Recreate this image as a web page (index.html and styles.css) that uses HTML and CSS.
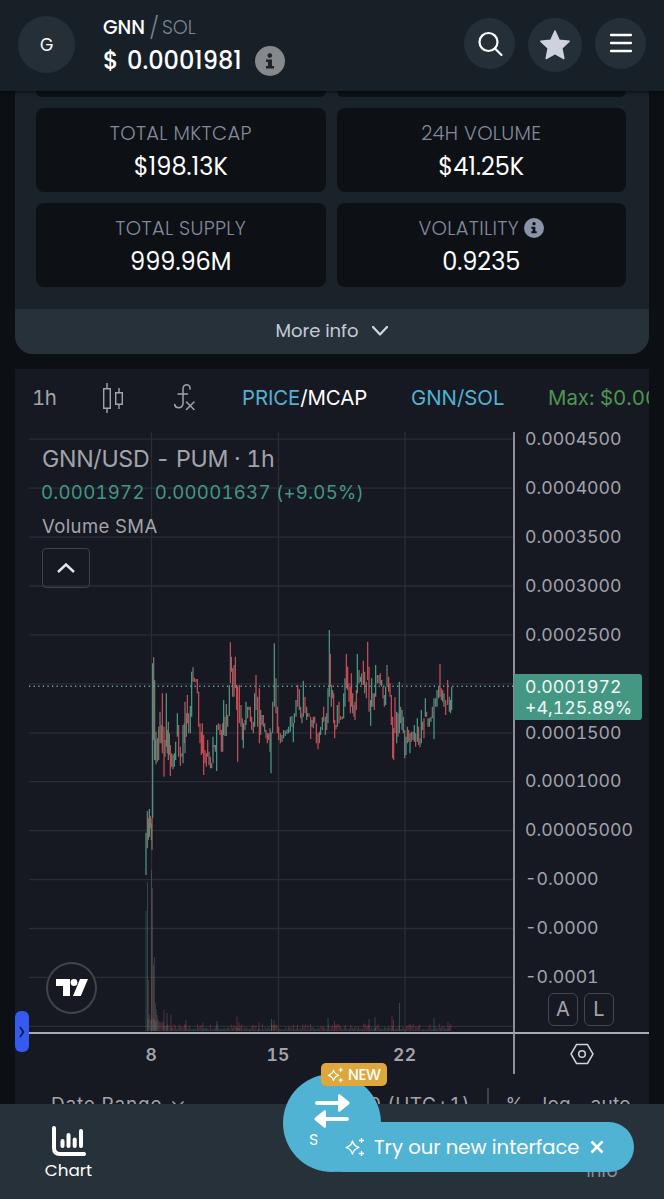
FILE: index.html
```html
<!DOCTYPE html>
<html lang="en">
<head>
    <meta charset="UTF-8">
    <meta name="viewport" content="width=device-width, initial-scale=1.0">
    <title>GNN/SOL</title>
    <link rel="stylesheet" href="styles.css">
</head>
<body>
    <header class="app-header">
        <div class="token-avatar">G</div>
        <div class="token-info">
            <div class="token-pair"><b>GNN</b><i>/</i><span>SOL</span></div>
            <div class="token-price">
                <span class="currency">$</span><span class="price-value">0.0001981</span>
                <svg class="price-info" viewBox="0 0 30 30"><circle cx="15" cy="15" r="15" fill="#85898b"/><circle cx="14.800" cy="9.500" r="2.300" fill="#1b242b"/><path d="M11 13.500h6v6.500h2v2.500h-8V20h2v-4h-2z" fill="#1b242b"/></svg>
            </div>
        </div>
        <div class="header-actions">
            <button class="round-btn"><svg width="28" height="28" viewBox="0 0 28 28" fill="none" stroke="#fff" stroke-width="2.200" stroke-linecap="round"><circle cx="12.500" cy="12" r="9"/><path d="M19 18.500l6.500 6.500"/></svg></button>
            <button class="round-btn star"><svg width="32" height="32" viewBox="0 0 32 32"><path d="M16 2l4.200 9.200 10 1.100-7.400 6.900 2 10.300L16 24.500l-8.800 5 2-10.300-7.400-6.900 10-1.100z" fill="#d0d1df" stroke="#d0d1df" stroke-width="1.500" stroke-linejoin="round"/></svg></button>
            <button class="round-btn"><svg width="24" height="22" viewBox="0 0 24 22" stroke="#fff" stroke-width="2.300" stroke-linecap="round"><path d="M2 2h20M2 10h20M2 18h20"/></svg></button>
        </div>
    </header>

    <main>
        <section class="info-panel">
            <div class="info-grid">
                <div class="info-card cut"></div>
                <div class="info-card cut"></div>
                <div class="info-card">
                    <h4>TOTAL MKTCAP</h4>
                    <p>$198.13K</p>
                </div>
                <div class="info-card">
                    <h4>24H VOLUME</h4>
                    <p>$41.25K</p>
                </div>
                <div class="info-card">
                    <h4>TOTAL SUPPLY</h4>
                    <p>999.96M</p>
                </div>
                <div class="info-card">
                    <h4>VOLATILITY <svg width="20" height="20" viewBox="0 0 30 30"><circle cx="15" cy="15" r="15" fill="#8b93a9"/><circle cx="15" cy="8.500" r="2.500" fill="#0d1115"/><path d="M11 13h6v7h2v3h-8v-3h2v-4h-2z" fill="#0d1115"/></svg></h4>
                    <p>0.9235</p>
                </div>
            </div>
            <div class="more-info">More info <svg width="18" height="12" viewBox="0 0 18 12" fill="none" stroke="#d3d6e0" stroke-width="2.200" stroke-linecap="round" stroke-linejoin="round"><path d="M2 2l7 7.500L16 2"/></svg></div>
        </section>

        <section class="chart-card">
            <div class="chart-toolbar">
                <span class="interval">1h</span>
                <svg width="24" height="32" viewBox="0 0 24 32" fill="none" stroke="#a3a4ab" stroke-width="1.400"><path d="M1.700 6.700h6.600v19.600H1.700zM5 1v5.500M5 26.500V31M13.700 10.700h6.600v11.600h-6.600zM17 6v4.500M17 22.500V27"/></svg>
                <svg class="fx" width="24" height="30" viewBox="0 0 24 30" fill="none" stroke="#a3a4ab" stroke-width="1.500" stroke-linecap="round"><path d="M17 6V5c0-4.500-7-4.500-7 1v14c0 6-7.500 6-8.300 1.500M5 11h9.500M13.500 19l7.500 7.500M21 19l-7.500 7.500"/></svg>
                <span class="price-toggle"><em>PRICE</em>/MCAP</span>
                <span class="pair-toggle">GNN/SOL</span>
                <span class="max-price">Max: $0.0004</span>
            </div>

            <div class="chart-body">
                <div class="plot">
                    <svg id="plot" width="485" height="600" viewBox="29 432 485 600">
                        <g id="grid" stroke="#2a2c36" stroke-width="1.300"></g>
                        <g id="volume" stroke-width="1"></g>
                        <g id="candles" stroke-width="1.200"></g>
                        <path d="M29 686.300h484" stroke="#6fa69c" stroke-width="1.400" stroke-dasharray="1.300 3.300"/>
                    </svg>
                    <div class="legend">
                        <div class="legend-title">GNN/USD - PUM · 1h</div>
                        <div class="legend-values"><span>0.0001972</span><span>0.00001637 (+9.05%)</span></div>
                        <div class="legend-study">Volume SMA</div>
                        <button class="collapse"><svg width="20" height="12" viewBox="0 0 20 12" fill="none" stroke="#e4e5ea" stroke-width="2.400"><path d="M2 10l8-7.500 8 7.500"/></svg></button>
                    </div>
                    <div class="tv-logo"><svg width="34" height="18" viewBox="0 0 34 18" fill="#fff"><path d="M1 0h14v17H8V7H1zM25 0h8l-7.200 17h-7.800z"/><circle cx="19" cy="3.500" r="3.400"/></svg></div>
                </div>
                <div class="price-scale">
                    <ul>
                        <li>0.0004500</li>
                        <li>0.0004000</li>
                        <li>0.0003500</li>
                        <li>0.0003000</li>
                        <li>0.0002500</li>
                        <li></li>
                        <li>0.0001500</li>
                        <li>0.0001000</li>
                        <li>0.00005000</li>
                        <li>-0.0000</li>
                        <li>-0.0000</li>
                        <li>-0.0001</li>
                    </ul>
                    <div class="last-price">0.0001972<br><span>+4,125.89%</span></div>
                    <div class="scale-modes"><span>A</span><span>L</span></div>
                </div>
                <div class="time-scale"><span>8</span><span>15</span><span>22</span></div>
                <div class="scale-settings"><svg width="24" height="22" viewBox="0 0 24 22" fill="none" stroke="#d2d3d8" stroke-width="1.500"><path d="M6.500 1.500h11L23 11l-5.500 9.500h-11L1 11z"/><circle cx="12" cy="11" r="3.300"/></svg></div>
            </div>

            <div class="range-bar">
                <span class="date-range">Date Range</span>
                <svg width="14" height="9" viewBox="0 0 14 9" fill="none" stroke="#a3a4ab" stroke-width="1.500"><path d="M1.500 1.500L7 7l5.500-5.500"/></svg>
                <span class="clock">12:45:30 (UTC+1)</span>
                <span class="divider"></span>
                <span class="percent">%</span>
                <span class="log">log</span>
                <span class="auto">auto</span>
            </div>
            <div class="drawer-handle"><svg width="6" height="12" viewBox="0 0 6 12" fill="none" stroke="#10142c" stroke-width="1.500"><path d="M1 1l3.500 5L1 11"/></svg></div>
        </section>
    </main>

    <nav class="bottom-nav">
        <div class="nav-item">
            <svg width="36" height="32" viewBox="0 0 36 32" fill="none" stroke="#fff" stroke-linecap="round"><path d="M3 3v20q0 6 6 6h24" stroke-width="4"/><path d="M11.500 16v5M17.500 10v11M23.700 14.500v6.500M30 6v15" stroke-width="4"/></svg>
            <span>Chart</span>
        </div>
        <div class="nav-item info"><span>Info</span></div>
        <div class="swap-btn">
            <svg width="36" height="36" viewBox="0 0 36 36" fill="#fff"><path d="M3 8h21V2.500q0-2 2-1l9 7.200q1.200 1.300 0 2.600l-9 7.200q-2 1-2-1V12H3q-2-.3-2-2t2-2zM33 24H12v-5.500q0-2-2-1l-9 7.200q-1.200 1.300 0 2.600l9 7.200q2 1 2-1V28h21q2-.3 2-2t-2-2z"/></svg>
            <span>S</span>
        </div>
        <div class="new-badge">
            <svg width="17" height="16" viewBox="0 0 20 20" fill="none" stroke="#fff" stroke-width="1.500" stroke-linejoin="round"><path d="M7.500 4q1.300 5 6.500 6.500-5.200 1.500-6.500 6.500Q6.200 12 1 10.500 6.200 9 7.500 4zM16.500 1v5M14 3.500h5M16.500 14v5M14 16.500h5"/></svg>
            NEW
        </div>
        <div class="try-pill">
            <svg width="20" height="20" viewBox="0 0 20 20" fill="none" stroke="#fff" stroke-width="1.300" stroke-linejoin="round"><path d="M7.500 4q1.300 5 6.500 6.500-5.200 1.500-6.500 6.500Q6.200 12 1 10.500 6.200 9 7.500 4zM16.500 1v5M14 3.500h5M16.500 14v5M14 16.500h5"/></svg>
            <span>Try our new interface</span>
            <svg width="14" height="14" viewBox="0 0 14 14" stroke="#fff" stroke-width="2.500"><path d="M1.500 1.500l11 11M12.500 1.500l-11 11"/></svg>
        </div>
    </nav>

    <script src="chart.js"></script>
</body>
</html>
```

FILE: styles.css
```css
:root {
    --bg: #0c1014;
    --header: #182027;
    --panel: #1a222a;
    --raised: #27313a;
    --chart: #161822;
    --muted: #82899d;
    --scale: #a3a4ab;
    --blue: #51b3d4;
    --green: #449782;
}

* {
    box-sizing: border-box;
}

body {
    margin: 0;
    height: 1199px;
    display: flex;
    flex-direction: column;
    overflow: hidden;
    background: var(--bg);
    color: white;
    font-family: Poppins, Inter, "Liberation Sans", sans-serif;
}

svg {
    display: block;
    flex: none;
}

button {
    padding: 0;
    border: none;
    background: none;
}

.app-header {
    flex: none;
    height: 91px;
    padding: 0 18px;
    display: flex;
    background: var(--header);
    box-shadow: 0 1px 4px rgba(0, 0, 0, 0.5);
    position: relative;
    z-index: 2;
}

.token-avatar {
    width: 57px;
    height: 57px;
    margin-top: 16px;
    border-radius: 50%;
    background: #252f37;
    display: flex;
    align-items: center;
    justify-content: center;
    font-size: 17px;
}

.token-info {
    margin: 15px 0 0 28px;
}

.token-pair {
    height: 24px;
    display: flex;
    align-items: center;
    font-size: 19px;
    color: #7c8391;
}

.token-pair b {
    width: 43px;
    font-weight: 500;
    color: white;
    letter-spacing: -0.1px;
}

.token-pair i {
    width: 16px;
    text-align: center;
    font-size: 22px;
    font-weight: 300;
    font-style: normal;
}

.token-pair span {
    font-weight: 300;
    letter-spacing: -0.1px;
}

.token-price {
    height: 42px;
    display: flex;
    align-items: center;
    font-size: 24px;
    font-weight: 500;
}

.currency {
    width: 24px;
}

.price-value {
    width: 128px;
}

.price-info {
    width: 30px;
    height: 30px;
    margin-top: 2px;
}

.header-actions {
    margin: 18px 0 0 auto;
    display: flex;
    gap: 13px;
}

.round-btn {
    width: 51px;
    height: 51px;
    border-radius: 50%;
    background: #252f37;
    display: flex;
    align-items: center;
    justify-content: center;
}

.round-btn.star {
    width: 54px;
    height: 54px;
}

main {
    flex: 1;
    min-height: 0;
    overflow: hidden;
    padding: 0 15px;
}

.info-panel {
    height: 263px;
    display: flex;
    flex-direction: column;
    justify-content: space-between;
    border-radius: 0 0 18px 18px;
    overflow: hidden;
    background: var(--panel);
}

.info-grid {
    padding: 0 23px 0 21px;
    display: grid;
    grid-template-columns: 1fr 1fr;
    gap: 11px;
}

.info-card {
    height: 84px;
    padding-top: 11px;
    border-radius: 8px;
    background: #0d1115;
    text-align: center;
}

.info-card.cut {
    height: 6px;
    padding: 0;
    border-radius: 0 0 8px 8px;
}

.info-card h4 {
    margin: 0;
    height: 28px;
    display: flex;
    align-items: center;
    justify-content: center;
    gap: 5px;
    color: var(--muted);
    font-size: 19.5px;
    font-weight: 300;
    letter-spacing: 0.3px;
}

.info-card p {
    margin: 5px 0 0;
    font-size: 24px;
    line-height: 30px;
}

.more-info {
    height: 45px;
    padding: 0 0 2px 0;
    display: flex;
    align-items: center;
    justify-content: center;
    gap: 12px;
    background: var(--raised);
    color: #c6cad5;
    font-size: 18px;
}

.chart-card {
    margin-top: 15px;
    height: 760px;
    background: var(--chart);
    font-family: Inter, "Liberation Sans", sans-serif;
    font-variant-numeric: tabular-nums;
    color: var(--scale);
    position: relative;
}

.chart-toolbar {
    height: 63px;
    padding: 0 0 6px 17px;
    display: flex;
    align-items: center;
    overflow: hidden;
    white-space: nowrap;
    font-size: 20.4px;
}

.chart-toolbar span {
    flex: none;
}

.chart-toolbar .interval {
    width: 70px;
    letter-spacing: -0.5px;
}

.chart-toolbar .fx {
    margin-left: 47px;
    margin-right: 45px;
}

.chart-toolbar .price-toggle {
    width: 169px;
    color: white;
    letter-spacing: -0.1px;
}

.price-toggle em {
    font-style: normal;
    color: #52b2d2;
}

.chart-toolbar .pair-toggle {
    width: 137px;
    color: #52b2d2;
}

.max-price {
    color: #4c9750;
}

.chart-body {
    margin-left: 14px;
    display: grid;
    grid-template-columns: 484px 136px;
    grid-template-rows: 600px 42px;
}

.plot {
    position: relative;
}

.legend {
    position: absolute;
    top: 11px;
    left: 13px;
    white-space: nowrap;
}

.legend-title {
    font-size: 23.2px;
    line-height: 32px;
    letter-spacing: -0.3px;
}

.legend-values {
    display: flex;
    gap: 10px;
    margin-left: -1px;
    color: #449782;
    font-size: 18.6px;
    line-height: 35px;
    letter-spacing: 0.25px;
}

.legend-study {
    font-size: 18.5px;
    line-height: 32px;
    letter-spacing: 0.4px;
}

.collapse {
    width: 48px;
    height: 40px;
    margin-top: 6px;
    border: 1.5px solid #3f414b;
    border-radius: 4px;
    display: flex;
    align-items: center;
    justify-content: center;
}

.tv-logo {
    position: absolute;
    left: 17px;
    top: 530px;
    width: 51px;
    height: 52px;
    border: 2px solid #42444d;
    border-radius: 50%;
    background: var(--chart);
    display: flex;
    align-items: center;
    justify-content: center;
}

.price-scale {
    position: relative;
    border-left: 2px solid #8e8f96;
}

.price-scale ul {
    list-style: none;
    margin: -17px 0 0;
    padding: 0 0 0 10px;
    font-size: 17.7px;
}

.price-scale li {
    height: 48.93px;
    line-height: 48.93px;
}

.last-price {
    position: absolute;
    left: -1px;
    top: 242px;
    width: 128px;
    height: 46px;
    padding: 2px 0 0 11px;
    border-radius: 0 3px 3px 0;
    background: var(--green);
    color: #f2f8f6;
    font-size: 17.7px;
    line-height: 21px;
}

.scale-modes {
    position: absolute;
    left: 33px;
    top: 561px;
    display: flex;
    gap: 6px;
}

.scale-modes span {
    width: 30px;
    height: 33px;
    border: 1.5px solid #44464f;
    border-radius: 6px;
    text-align: center;
    font-size: 20px;
    line-height: 31px;
}

.time-scale {
    padding-left: 59px;
    display: grid;
    grid-template-columns: repeat(3, 126.7px);
    border-top: 2px solid #aaabb0;
    text-align: center;
    font-size: 17.5px;
    font-weight: 600;
    line-height: 41px;
    letter-spacing: 0.3px;
}

.scale-settings {
    border-top: 2px solid #aaabb0;
    border-left: 2px solid #8e8f96;
    display: flex;
    align-items: center;
    justify-content: center;
}

.range-bar {
    height: 60px;
    padding-left: 36px;
    display: flex;
    align-items: center;
    font-size: 19px;
    letter-spacing: 0.3px;
    white-space: nowrap;
}

.date-range {
    width: 120px;
    letter-spacing: 0.8px;
}

.clock {
    width: 170px;
    margin-left: 115px;
    display: flex;
    justify-content: flex-end;
    letter-spacing: 0.5px;
}

.divider {
    width: 1.5px;
    height: 32px;
    margin: 0 17px;
    background: #3f414b;
}

.percent {
    width: 37px;
}

.log {
    width: 48px;
}

.drawer-handle {
    position: absolute;
    left: 0;
    top: 642px;
    width: 14px;
    height: 41px;
    border-radius: 6px;
    background: #345af2;
    display: flex;
    align-items: center;
    justify-content: center;
}

.bottom-nav {
    flex: none;
    height: 95px;
    padding: 0 28px;
    display: flex;
    justify-content: space-between;
    background: var(--raised);
    position: relative;
    font-size: 16.8px;
}

.nav-item {
    width: 81px;
    padding-top: 21px;
    display: flex;
    flex-direction: column;
    align-items: center;
}

.nav-item.info {
    width: 68px;
    padding-top: 54px;
    color: #8b93a0;
}

.swap-btn {
    position: absolute;
    left: 283px;
    top: -30px;
    width: 98px;
    height: 98px;
    border-radius: 50%;
    background: var(--blue);
}

.swap-btn svg {
    margin: 19px 0 0 31px;
}

.swap-btn span {
    position: absolute;
    left: 26px;
    top: 57px;
    font-size: 16px;
    line-height: 18px;
}

.new-badge {
    position: absolute;
    left: 321px;
    top: -41px;
    width: 66px;
    height: 23px;
    padding-left: 6px;
    border-radius: 5px;
    background: #dda73b;
    display: flex;
    align-items: center;
    gap: 4px;
    font-size: 15px;
    font-weight: 500;
    letter-spacing: -0.3px;
}

.try-pill {
    position: absolute;
    left: 317px;
    top: 18px;
    width: 317px;
    height: 50px;
    padding-left: 28px;
    border-radius: 25px;
    background: var(--blue);
    display: flex;
    align-items: center;
    white-space: nowrap;
    font-size: 19.6px;
}

.try-pill span {
    width: 216px;
    margin-left: 9px;
}
```

FILE: chart.js
```js
const GREEN = '#4d9d8a';
const RED = '#cf4f59';
const MIXED = '#80796f';
const COLORS = { g: GREEN, r: RED, m: MIXED };

function line(group, x1, y1, x2, y2, color, opacity) {
    const el = document.createElementNS('http://www.w3.org/2000/svg', 'line');
    el.setAttribute('x1', x1);
    el.setAttribute('y1', y1);
    el.setAttribute('x2', x2);
    el.setAttribute('y2', y2);
    if (color) el.setAttribute('stroke', color);
    if (opacity) el.setAttribute('opacity', opacity);
    document.getElementById(group).appendChild(el);
}

// Grid
for (let i = 0; i < 13; i++) {
    const y = 439.2 + i * 48.93;
    line('grid', 29, y, 513, y);
}
[151.5, 278.5, 405].forEach(x => line('grid', x, 432, x, 1032));

// Bars: time offset, high, low, direction
const first = `48,668,795,g 52,603,715,m 55,625,690,m 58,597,680,g 61,618,655,r 64,640,690,m 66,625,720,m
68,160,625,g 71,142,390,m 74,210,450,m 76,390,450,g 78,365,463,m 82,385,455,m 86,350,450,m 90,305,400,m
94,345,400,m 97,250,430,r 102,350,500,r 105,390,440,m 109,250,410,g 112,360,430,m 115,335,450,m 118,370,435,m
121,405,498,r 125,430,470,r 129,435,478,g 133,430,470,g 137,395,450,g 142,310,380,g 146,345,440,r
151,410,468,r 156,430,440,g 159,345,460,g 163,340,400,m 165,275,430,m 169,310,380,m 172,255,340,r 176,310,370,m
181,288,370,g 185,185,320,g 189,172,215,m 193,203,215,r 198,207,217,r 202,207,250,r 206,245,350,r
210,340,400,r 214,365,435,r 217,340,430,r 221,375,495,r 225,420,460,r 229,430,470,r 233,390,440,r
237,425,465,m 241,440,475,r 245,460,475,g 249,380,460,g 253,405,412,g 256,405,425,m 260,345,483,g
265,340,360,r 270,343,375,r 274,360,425,r 278,340,425,m 281,270,375,g 285,320,378,m 289,282,378,m
293,315,350,m 298,225,318,g 301,97,220,r 304,140,185,m 308,175,260,r 312,165,260,m 316,140,235,r
320,225,300,r 323,230,455,r 328,225,340,r 333,285,350,m 337,325,390,r 340,340,415,g 345,330,360,m
348,275,345,g 353,290,325,m 357,290,300,g 361,290,335,r 365,320,360,r 370,335,370,m 374,250,350,g
378,195,300,r 383,260,350,m 388,235,400,r 392,300,375,m 396,315,345,g 400,315,350,r 404,340,365,m
408,360,385,m 412,370,400,r 416,370,390,r 420,355,425,m 423,365,490,g 428,275,370,m 433,100,290,g
438,205,310,m 442,290,370,r 446,350,390,r 451,370,400,r 456,375,395,g 461,360,385,g 466,362,378,m
471,358,372,g 476,350,370,g 481,320,365,g 486,318,350,m 490,340,397,g 493,310,340,g 498,270,320,g
503,225,290,r 508,238,300,m 512,290,325,r 516,310,340,m 520,212,320,g 525,260,310,r 530,290,330,m`;

const second = `52,310,320,g 57,310,320,r 62,320,387,r 66,330,350,g 70,320,355,m 74,320,340,r 79,340,400,r
84,370,418,r 88,365,400,m 92,350,375,g 97,322,360,g 101,290,335,r 106,320,375,m 110,310,360,m 114,235,340,g
118,60,260,g 121,132,230,r 124,225,290,m 128,240,265,m 131,250,340,r 134,330,385,r 138,345,358,r
142,285,350,g 147,275,340,r 152,318,330,r 157,320,328,g 161,250,325,g 165,205,290,g 169,132,235,r
173,170,240,r 177,220,275,r 181,230,310,r 184,190,290,r 188,250,310,m 192,285,320,m 195,275,330,r
199,240,300,r 202,132,250,g 207,180,220,m 211,200,215,g 215,190,225,m 220,152,225,r 224,185,250,m
229,215,265,r 233,95,210,r 237,170,305,r 242,270,347,g 245,205,290,g 249,250,290,m 253,250,300,r
257,165,260,g 262,195,220,m 267,195,220,m 271,190,225,r 275,210,230,g 279,230,265,r 283,255,290,m
287,230,285,g 291,165,230,m 296,200,245,r 300,220,260,r 304,255,345,r 308,320,445,r 311,355,450,r
315,262,370,r 320,305,400,g 324,310,380,r 328,215,370,g 332,290,340,m 336,300,360,g 340,320,370,m
344,360,445,m 348,380,435,g 352,350,400,m 356,360,395,r 360,370,430,g 364,365,395,r 369,365,390,g
373,345,395,g 377,370,410,r 382,325,395,g 386,350,405,r 390,385,412,m 394,300,400,g 398,335,360,m
402,325,385,r 406,265,320,g 410,305,320,r 414,325,350,m 418,325,350,g 423,320,335,g 427,290,325,m
432,265,387,g 437,265,290,m 441,240,290,g 446,230,265,g 450,162,260,r 454,235,270,r 458,240,275,m
462,250,290,g 467,270,315,r 473,210,285,r 478,260,305,m 482,270,310,g 485,230,300,g`;

function drawBars(data, startX) {
    data.split(/\s+/).forEach(bar => {
        const [t, high, low, dir] = bar.split(',');
        const x = startX + t / 3;
        line('candles', x, 610 + high / 3, x, 610 + low / 3, COLORS[dir]);
    });
}
drawBars(first, 130);
drawBars(second, 290);

// Volume
const spikes = [
    [146, 911, 'g'], [147.5, 882, 'g'], [148.6, 980, 'r'], [151.5, 870, 'm'], [152.6, 888, 'm'], [153.5, 965, 'm'],
    [154.4, 957, 'm'], [155.3, 1003, 'm'], [156.2, 1009, 'm'], [157.2, 1015, 'm'], [164, 1010, 'r'], [167, 1013, 'g'],
    [171, 1015, 'r'], [186, 1020, 'g'], [203, 1023, 'r'], [217, 1021, 'g'], [237, 1016, 'r'], [239, 1022, 'r'],
    [259, 1022, 'r'], [271.5, 1019, 'g'], [274, 1020, 'g'], [328, 1018, 'g'], [334.5, 1021, 'r'], [369, 1019, 'm'],
    [375, 1017, 'g'], [392, 1016, 'r'], [393.5, 1020, 'r'], [399.5, 1003, 'g'], [434, 1018, 'g'], [448, 1022, 'r']
];
spikes.forEach(([x, top, dir]) => line('volume', x, top, x, 1031, COLORS[dir], 0.38));

let seed = 7;
for (let x = 148; x < 452; x += 1.3) {
    seed = (seed * 16807) % 2147483647;
    const r = seed / 2147483647;
    const height = 1.5 + r * r * 6 + Math.max(0, 172 - x) * 0.45;
    line('volume', x, 1031 - height, x, 1031, r > 0.6 ? RED : GREEN, 0.35);
}
// current bar volume at the scale edge
line('volume', 513.5, 1007, 513.5, 1031, GREEN, 0.8);
```
